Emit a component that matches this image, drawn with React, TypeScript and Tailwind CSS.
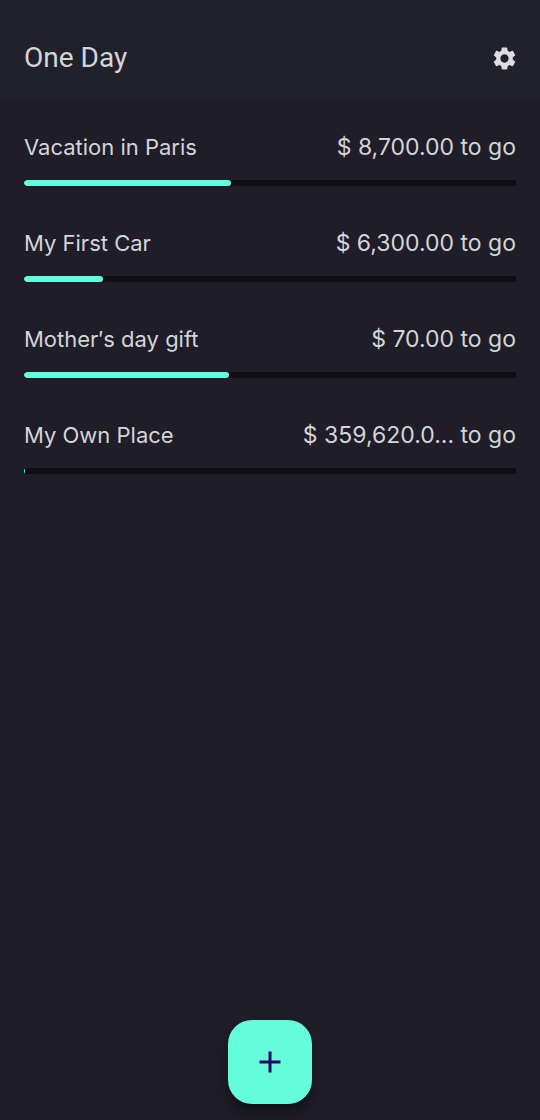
type Goal = { name: string; remaining: string; percent: number };

const goals: Goal[] = [
  { name: "Vacation in Paris", remaining: "$ 8,700.00", percent: 42 },
  { name: "My First Car", remaining: "$ 6,300.00", percent: 16 },
  { name: "Mother′s day gift", remaining: "$ 70.00", percent: 41.7 },
  { name: "My Own Place", remaining: "$ 359,620.0...", percent: 0.2 },
];

function GearIcon() {
  return (
    <svg viewBox="2 2 20 20" className="size-[23px]" fill="currentColor" aria-hidden="true">
      <path d="M19.14 12.94c.04-.3.06-.61.06-.94 0-.32-.02-.64-.07-.94l2.03-1.58c.18-.14.23-.41.12-.61l-1.92-3.32c-.12-.22-.37-.29-.59-.22l-2.39.96c-.5-.38-1.03-.7-1.62-.94l-.36-2.54c-.04-.24-.24-.41-.48-.41h-3.84c-.24 0-.43.17-.47.41l-.36 2.54c-.59.24-1.13.57-1.62.94l-2.39-.96c-.22-.08-.47 0-.59.22L2.74 8.87c-.12.21-.08.47.12.61l2.03 1.58c-.05.3-.09.63-.09.94s.02.64.07.94l-2.03 1.58c-.18.14-.23.41-.12.61l1.92 3.32c.12.22.37.29.59.22l2.39-.96c.5.38 1.03.7 1.62.94l.36 2.54c.05.24.24.41.48.41h3.84c.24 0 .44-.17.47-.41l.36-2.54c.59-.24 1.13-.56 1.62-.94l2.39.96c.22.08.47 0 .59-.22l1.92-3.32c.12-.22.07-.47-.12-.61l-2.01-1.58zM12 15.6c-1.98 0-3.6-1.62-3.6-3.6s1.62-3.6 3.6-3.6 3.6 1.62 3.6 3.6-1.62 3.6-3.6 3.6z" />
    </svg>
  );
}

function GoalRow({ goal }: { goal: Goal }) {
  return (
    <li className="flex flex-col gap-[18px]">
      <div className="flex items-baseline justify-between gap-4 leading-[30px]">
        <h2 className="truncate text-[22px]">{goal.name}</h2>
        <p className="text-[23px] whitespace-nowrap">{goal.remaining} to go</p>
      </div>
      <div
        role="progressbar"
        aria-label={goal.name}
        aria-valuenow={goal.percent}
        aria-valuemin={0}
        aria-valuemax={100}
        className="h-1.5 overflow-hidden rounded-full bg-[#0f0e14]"
      >
        <div className="h-full rounded-full bg-[#64ffda]" style={{ width: `${goal.percent}%` }} />
      </div>
    </li>
  );
}

export default function App() {
  return (
    <div className="flex min-h-screen flex-col bg-[#1e1d28] font-['Inter',sans-serif] text-[#d5d4d9]">
      <header className="flex items-center justify-between bg-[#21212c] px-6 pt-10 pb-6">
        <h1 className="font-['Roboto',sans-serif] text-[28px] leading-9">One Day</h1>
        <button type="button" aria-label="Settings" className="text-[#dddce0]">
          <GearIcon />
        </button>
      </header>
      <main className="flex-1 px-6 pt-8">
        <ul className="flex flex-col gap-[42px]">
          {goals.map((goal) => (
            <GoalRow key={goal.name} goal={goal} />
          ))}
        </ul>
      </main>
      <footer className="sticky bottom-0 flex justify-center pb-4">
        <button
          type="button"
          aria-label="Add goal"
          className="flex size-[84px] items-center justify-center rounded-3xl bg-[#64ffda] text-[#1a0a63] shadow-lg shadow-black/40"
        >
          <svg viewBox="0 0 22 22" className="size-[22px]" stroke="currentColor" strokeWidth="3" aria-hidden="true">
            <path d="M11 0.5V21.5M0.5 11H21.5" />
          </svg>
        </button>
      </footer>
    </div>
  );
}
